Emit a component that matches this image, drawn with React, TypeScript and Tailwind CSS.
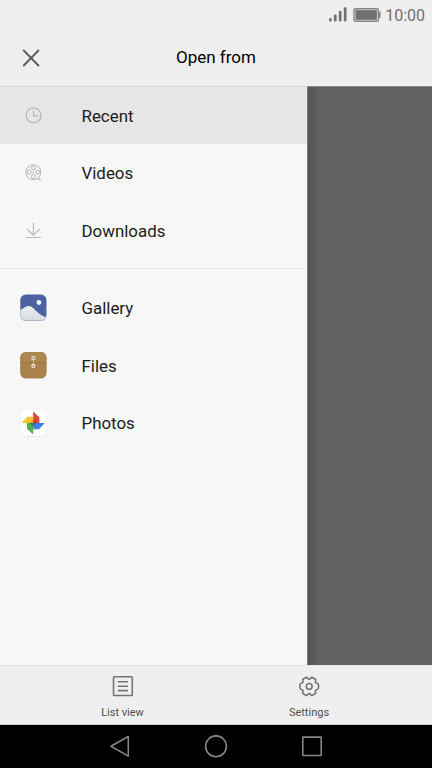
import type { ReactNode } from "react";

type DrawerItem = {
  label: string;
  icon: ReactNode;
  active?: boolean;
};

const ClockIcon = () => (
  <svg width="18" height="18" viewBox="0 0 18 18" fill="none" stroke="#b0b0b0" strokeWidth="1.1">
    <circle cx="9.6" cy="8.4" r="7.4" />
    <path d="M9.6 3.5V9h5" />
  </svg>
);

const ReelIcon = () => (
  <svg width="18" height="18" viewBox="0 0 18 18" fill="none" stroke="#b4b4b4" strokeWidth="1">
    <circle cx="9.400" cy="8.200" r="7.500" />
    <circle cx="9.400" cy="3.900" r="2" />
    <circle cx="9.400" cy="12.500" r="2" />
    <circle cx="5.100" cy="8.200" r="2" />
    <circle cx="13.700" cy="8.200" r="2" />
    <circle cx="9.400" cy="8.200" r="0.500" />
    <path d="M13.500 15.500h3.700M14.300 14l1.500 1.500" />
  </svg>
);

const DownloadIcon = () => (
  <svg width="18" height="18" viewBox="0 0 18 18" fill="none" stroke="#b8b8b8" strokeWidth="1.1">
    <path d="M9.400 2v12.200M3.100 8.100l6.300 6.100 6.200-6.100M2 16.500h15" />
  </svg>
);

const GalleryIcon = () => (
  <svg width="28" height="28" viewBox="-0.4 0.5 28 28">
    <defs>
      <clipPath id="galleryClip">
        <rect x="1" y="1" width="26" height="26" rx="5.5" />
      </clipPath>
      <linearGradient id="galleryHill" x1="0" y1="0" x2="0" y2="1">
        <stop offset="0" stopColor="#eceff2" />
        <stop offset="1" stopColor="#d5dade" />
      </linearGradient>
    </defs>
    <rect x="1" y="1.500" width="26" height="26" rx="5.5" fill="#c3c6ca" />
    <g clipPath="url(#galleryClip)">
      <rect width="28" height="28" fill="#4e62a3" />
      <path d="M0 17C4 15.200 6 12.500 9 12.500c3.500 0 5 2.500 8 5.200 4 3.500 6.500 5.300 11 6.300V28H0z" fill="url(#galleryHill)" />
      <circle cx="19.500" cy="9" r="2.400" fill="#f6f8fb" />
    </g>
  </svg>
);

const FilesIcon = () => (
  <svg width="28" height="28" viewBox="-0.4 1 28 28">
    <rect x="1" y="1.500" width="26" height="26" rx="5.5" fill="#a3895f" />
    <rect x="1" y="1" width="26" height="26" rx="5.500" fill="#a9814b" />
    <path d="M1 11.300V6.500A5.500 5.500 0 0 1 6.500 1h15A5.500 5.500 0 0 1 27 6.500v4.800z" fill="#ad8750" />
    <path d="M1 11.600h26" stroke="#94713f" strokeWidth="0.700" />
    <path d="M14 8.500v5" stroke="#d6c9aa" strokeWidth="0.800" />
    <circle cx="14" cy="7.200" r="1.500" fill="#9a7647" stroke="#ece4d2" strokeWidth="1.300" />
    <circle cx="14" cy="15" r="1.500" fill="#9a7647" stroke="#ece4d2" strokeWidth="1.300" />
  </svg>
);

const PhotosIcon = () => (
  <svg width="28" height="28" viewBox="-0.4 0 28 28">
    <rect x="1" y="1.500" width="26" height="26" rx="5.500" fill="#dedede" />
    <rect x="1" y="1" width="26" height="26" rx="5.500" fill="#ffffff" />
    <path d="M13.800 2.600l6.200 5.800v5.600h-6.200z" fill="#e24436" />
    <path d="M25.400 14l-5.800 6.200h-5.800V14z" fill="#3f7fe8" />
    <path d="M13.800 25.600l-6.200-5.800V14h6.200z" fill="#4fae4e" />
    <path d="M2.400 14l5.800-6.200h5.600V14z" fill="#f8c230" />
    <path d="M13.800 14V10.500L17.500 14z" fill="#b8322c" />
    <path d="M13.800 14h3.700l-3.700 3.700z" fill="#3163c0" />
    <path d="M13.800 14v3.700L10.100 14z" fill="#2f8b45" />
    <path d="M13.800 14H10.100l3.700-3.700z" fill="#ee9d24" />
  </svg>
);

const ListIcon = () => (
  <svg width="22" height="22" viewBox="0 0 22 22" fill="none" stroke="#757575" strokeWidth="1.600">
    <rect x="1.500" y="1.700" width="18.800" height="18.800" rx="0.800" />
    <path d="M5.800 6.800h10.200M5.800 11.200h10.200M5.800 15.600h10.200" />
  </svg>
);

const GearIcon = () => (
  <svg width="22" height="22" viewBox="-11.2 -11.4 22 22" fill="none" stroke="#757575" strokeWidth="1.600" strokeLinejoin="round">
    <path d="M9.120-2.270Q9.700 0 9.120 2.270C8 3.900 5.800 2.800 6.100 4.800C6.300 5.700 6.900 6 6.530 6.760Q4.850 8.400 2.590 9.040C1.300 8.900 1.600 7.200 0 7.200S-1.300 8.900-2.590 9.040Q-4.850 8.400-6.530 6.760C-6.900 6-6.300 5.700-6.100 4.800C-5.800 2.800-8 3.900-9.120 2.270Q-9.700 0-9.120-2.270C-8-3.900-5.800-2.800-6.100-4.800C-6.300-5.700-6.900-6-6.530-6.760Q-4.850-8.400-2.590-9.040C-1.300-8.900-1.600-7.200 0-7.200S1.300-8.900 2.590-9.040Q4.850-8.400 6.530-6.760C6.900-6 6.300-5.700 6.100-4.800C5.800-2.800 8-3.900 9.120-2.270Z" />
    <circle r="2.900" />
  </svg>
);

const sources: DrawerItem[] = [
  { label: "Recent", icon: <ClockIcon />, active: true },
  { label: "Videos", icon: <ReelIcon /> },
  { label: "Downloads", icon: <DownloadIcon /> },
];

const apps: DrawerItem[] = [
  { label: "Gallery", icon: <GalleryIcon /> },
  { label: "Files", icon: <FilesIcon /> },
  { label: "Photos", icon: <PhotosIcon /> },
];

function StatusBar() {
  return (
    <div className="flex h-[30px] shrink-0 items-center justify-end pr-[7px]">
      <svg className="mr-[6px]" width="19" height="16" viewBox="0 0 19 16" fill="#707070">
        <rect x="1" y="11" width="2.700" height="3.500" rx="1" />
        <rect x="5.900" y="7.500" width="2.700" height="7" rx="1" />
        <rect x="10.800" y="3.700" width="2.700" height="10.800" rx="1" />
        <rect x="15.800" y="0.200" width="2.700" height="14.300" rx="1" />
      </svg>
      <svg className="mr-[4px]" width="28" height="16" viewBox="0 0 28 16">
        <rect x="0.900" y="1.700" width="24.600" height="12.600" rx="1.300" fill="#c4c4c4" stroke="#858585" strokeWidth="1.200" />
        <rect x="2.600" y="3.200" width="21.200" height="9.600" fill="#707070" />
        <path d="M26.200 4.800h1.300v6h-1.300z" fill="#707070" />
      </svg>
      <span className="pt-px text-[16px] leading-[30px] text-[#707070]">10:00</span>
    </div>
  );
}

function DrawerRow({ item }: { item: DrawerItem }) {
  return (
    <li className={`flex items-center ${item.active ? "h-[57px] bg-[#e6e6e6]" : "h-[57.6px]"}`}>
      <span className="flex w-[66.5px] justify-center">{item.icon}</span>
      <span className="ml-[15px] pt-[2px] text-[16.9px] text-[#1c1c1c]">{item.label}</span>
    </li>
  );
}

export default function App() {
  return (
    <div className="flex h-[768px] w-[432px] flex-col overflow-hidden bg-[#efefef] font-['Roboto',sans-serif]">
      <StatusBar />

      {/* Title bar */}
      <header className="grid h-[56px] shrink-0 grid-cols-[62px_1fr_62px] items-center">
        <button className="flex justify-center" aria-label="Close">
          <svg width="18" height="18" viewBox="0 0 18 18" fill="none" stroke="#5c5c5c" strokeWidth="1.900" strokeLinecap="round">
            <path d="M1.800 1.500l14.600 15M16.400 1.500l-14.600 15" />
          </svg>
        </button>
        <h1 className="pb-[3px] text-center text-[17px] leading-5 text-black">Open from</h1>
      </header>

      {/* Drawer over the dimmed page */}
      <main className="flex h-[579px] shrink-0 bg-[#636363]">
        <nav className="w-[307px] border-t border-[#d6d6d6] bg-[#f7f7f7]">
          <ul>
            {sources.map((item) => (
              <DrawerRow key={item.label} item={item} />
            ))}
          </ul>
          <hr className="mt-[9px] mb-[10px] h-px border-0 bg-[#e7e7e7]" />
          <ul>
            {apps.map((item) => (
              <DrawerRow key={item.label} item={item} />
            ))}
          </ul>
        </nav>
        <div className="flex-1 border-t border-l border-t-[#8a8a8a] border-l-[#7a7a7a]">
          <div className="h-full w-3 bg-gradient-to-r from-[#545454] to-[#636363]" />
        </div>
      </main>

      {/* Bottom actions */}
      <footer className="flex h-[60px] shrink-0 justify-center border-t border-b border-t-[#e4e4e4] border-b-[#c8c8c8] text-[11px] text-[#505050]">
        <button className="flex w-[186px] flex-col items-center pt-[9px]">
          <ListIcon />
          <span className="mt-[8px] leading-4">List view</span>
        </button>
        <button className="flex w-[187px] flex-col items-center pt-[9px]">
          <GearIcon />
          <span className="mt-[8px] leading-4">Settings</span>
        </button>
      </footer>

      {/* System navigation */}
      <div className="flex h-[43px] shrink-0 items-center justify-center gap-[72px] bg-black pb-px">
        <svg width="24" height="24" viewBox="0 0 24 24" fill="none" stroke="#858585" strokeWidth="1.600" strokeLinejoin="round">
          <path d="M20.300 2.500v19.600L3 12.300z" />
        </svg>
        <svg width="24" height="24" viewBox="0 0 24 24" fill="none" stroke="#858585" strokeWidth="1.600">
          <circle cx="12" cy="12.300" r="10.400" />
        </svg>
        <svg width="24" height="24" viewBox="0 0 24 24" fill="none" stroke="#858585" strokeWidth="1.600">
          <rect x="2.800" y="3.100" width="18.400" height="18.400" rx="0.500" />
        </svg>
      </div>
    </div>
  );
}
